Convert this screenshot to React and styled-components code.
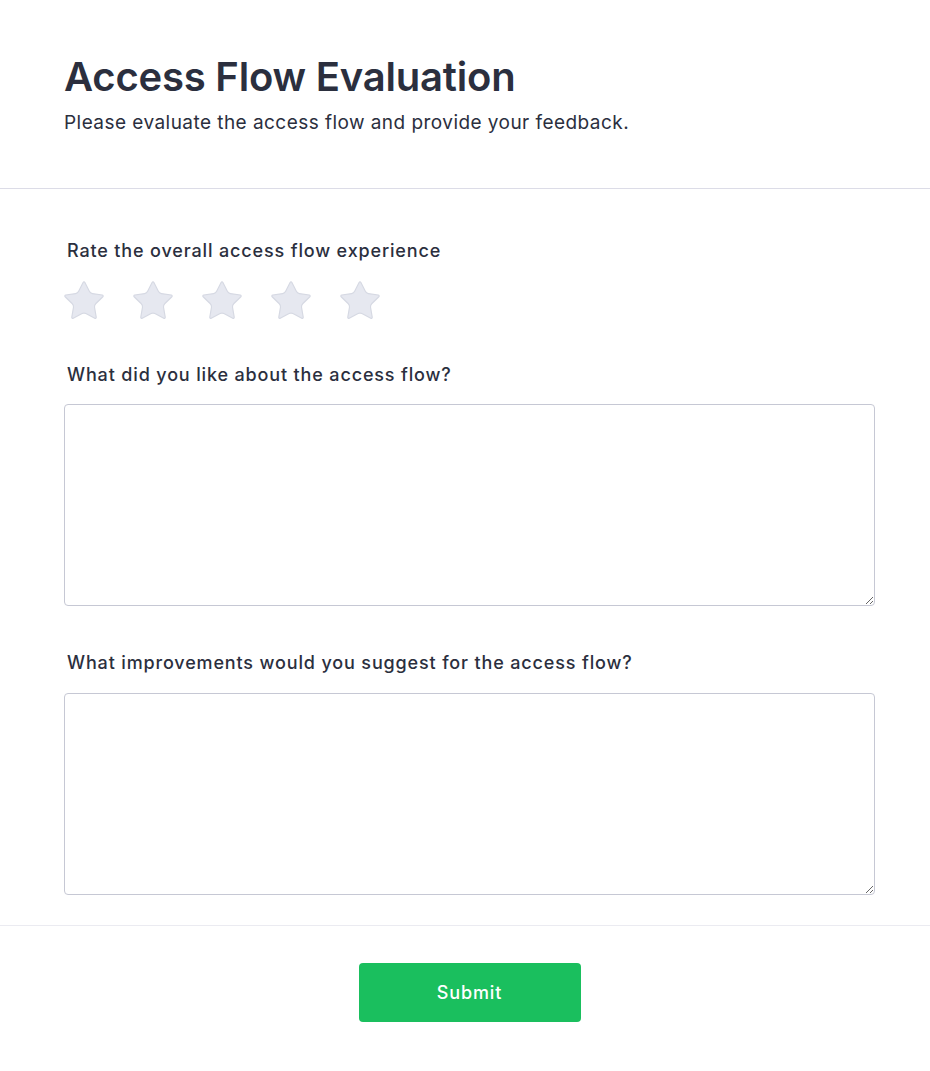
import React from "react";
import styled, { createGlobalStyle } from "styled-components";

const Global = createGlobalStyle`
  * { box-sizing: border-box; }
  html, body { margin: 0; padding: 0; background: #ffffff; }
  body { font-family: Inter, "Noto Sans", sans-serif; color: #2d3142; }
`;

const Page = styled.div`
  width: 930px;
  min-height: 1071px;
  background: #fff;
  display: flex;
  flex-direction: column;
`;

const Header = styled.header`
  padding: 53px 55px 52px 64px;
  border-bottom: 1px solid #dcdce7;
`;

const Title = styled.h1`
  margin: 0 0 8px;
  font-size: 40px;
  line-height: 48px;
  font-weight: 600;
  color: #2b2f3e;
  letter-spacing: -0.2px;
`;

const Subtitle = styled.p`
  margin: 0;
  font-size: 19px;
  line-height: 27px;
  font-weight: 400;
  letter-spacing: 0.45px;
  color: #2b2f3e;
`;

const Form = styled.form`
  padding: 48px 55px 30px 64px;
  display: flex;
  flex-direction: column;
  border-bottom: 1px solid #ebebf1;
`;

const Field = styled.div`
  display: flex;
  flex-direction: column;
  gap: ${(p) => p.$gap}px;
  margin-top: ${(p) => p.$top}px;
`;

const Label = styled.label`
  padding-left: 3px;
  font-size: 18px;
  line-height: 27px;
  font-weight: 450;
  letter-spacing: 0.85px;
  color: #2b2f3e;
`;

const Stars = styled.div`
  display: flex;
  gap: 23px;
  margin-left: -3px;
`;

const StarButton = styled.button`
  border: 0;
  background: none;
  padding: 0;
  width: 46px;
  height: 46px;
  cursor: pointer;
  display: block;
`;

const TextArea = styled.textarea`
  display: block;
  width: 100%;
  height: 202px;
  border: 1px solid #c6c8d4;
  border-radius: 4px;
  padding: 10px 12px;
  font-family: Inter, sans-serif;
  font-size: 16px;
  color: #2b2f3e;
  resize: vertical;
  outline: none;
`;

const Footer = styled.div`
  padding: 37px 55px 50px 64px;
  display: flex;
  justify-content: center;
`;

const SubmitButton = styled.button`
  width: 222px;
  height: 59px;
  border: 0;
  border-radius: 4px;
  background: #1abf5e;
  color: #ffffff;
  font-family: Inter, sans-serif;
  font-size: 18px;
  font-weight: 450;
  letter-spacing: 0.9px;
  cursor: pointer;
`;

const Star = () => (
  <svg width="46" height="46" viewBox="0 0 24 24">
    <path
      d="M11.525 2.295a.53.53 0 0 1 .95 0l2.31 4.679a2.123 2.123 0 0 0 1.595 1.16l5.166.756a.53.53 0 0 1 .294.904l-3.736 3.638a2.123 2.123 0 0 0-.611 1.878l.882 5.14a.53.53 0 0 1-.771.56l-4.618-2.428a2.122 2.122 0 0 0-1.973 0L6.396 21.01a.53.53 0 0 1-.77-.56l.881-5.139a2.122 2.122 0 0 0-.611-1.879L2.16 9.795a.53.53 0 0 1 .294-.906l5.165-.755a2.122 2.122 0 0 0 1.597-1.16z"
      fill="#e6e8f0"
      stroke="#d6d9e3"
      strokeWidth="0.6"
    />
  </svg>
);

export default function App() {
  return (
    <Page>
      <Global />
      <Header>
        <Title>Access Flow Evaluation</Title>
        <Subtitle>Please evaluate the access flow and provide your feedback.</Subtitle>
      </Header>
      <Form onSubmit={(e) => e.preventDefault()}>
        <Field $gap={14} $top={0}>
          <Label>Rate the overall access flow experience</Label>
          <Stars>
            {[1, 2, 3, 4, 5].map((n) => (
              <StarButton type="button" key={n} aria-label={`${n} star`}>
                <Star />
              </StarButton>
            ))}
          </Stars>
        </Field>
        <Field $gap={16} $top={37}>
          <Label>What did you like about the access flow?</Label>
          <TextArea />
        </Field>
        <Field $gap={17} $top={43}>
          <Label>What improvements would you suggest for the access flow?</Label>
          <TextArea />
        </Field>
      </Form>
      <Footer>
        <SubmitButton type="submit">Submit</SubmitButton>
      </Footer>
    </Page>
  );
}
